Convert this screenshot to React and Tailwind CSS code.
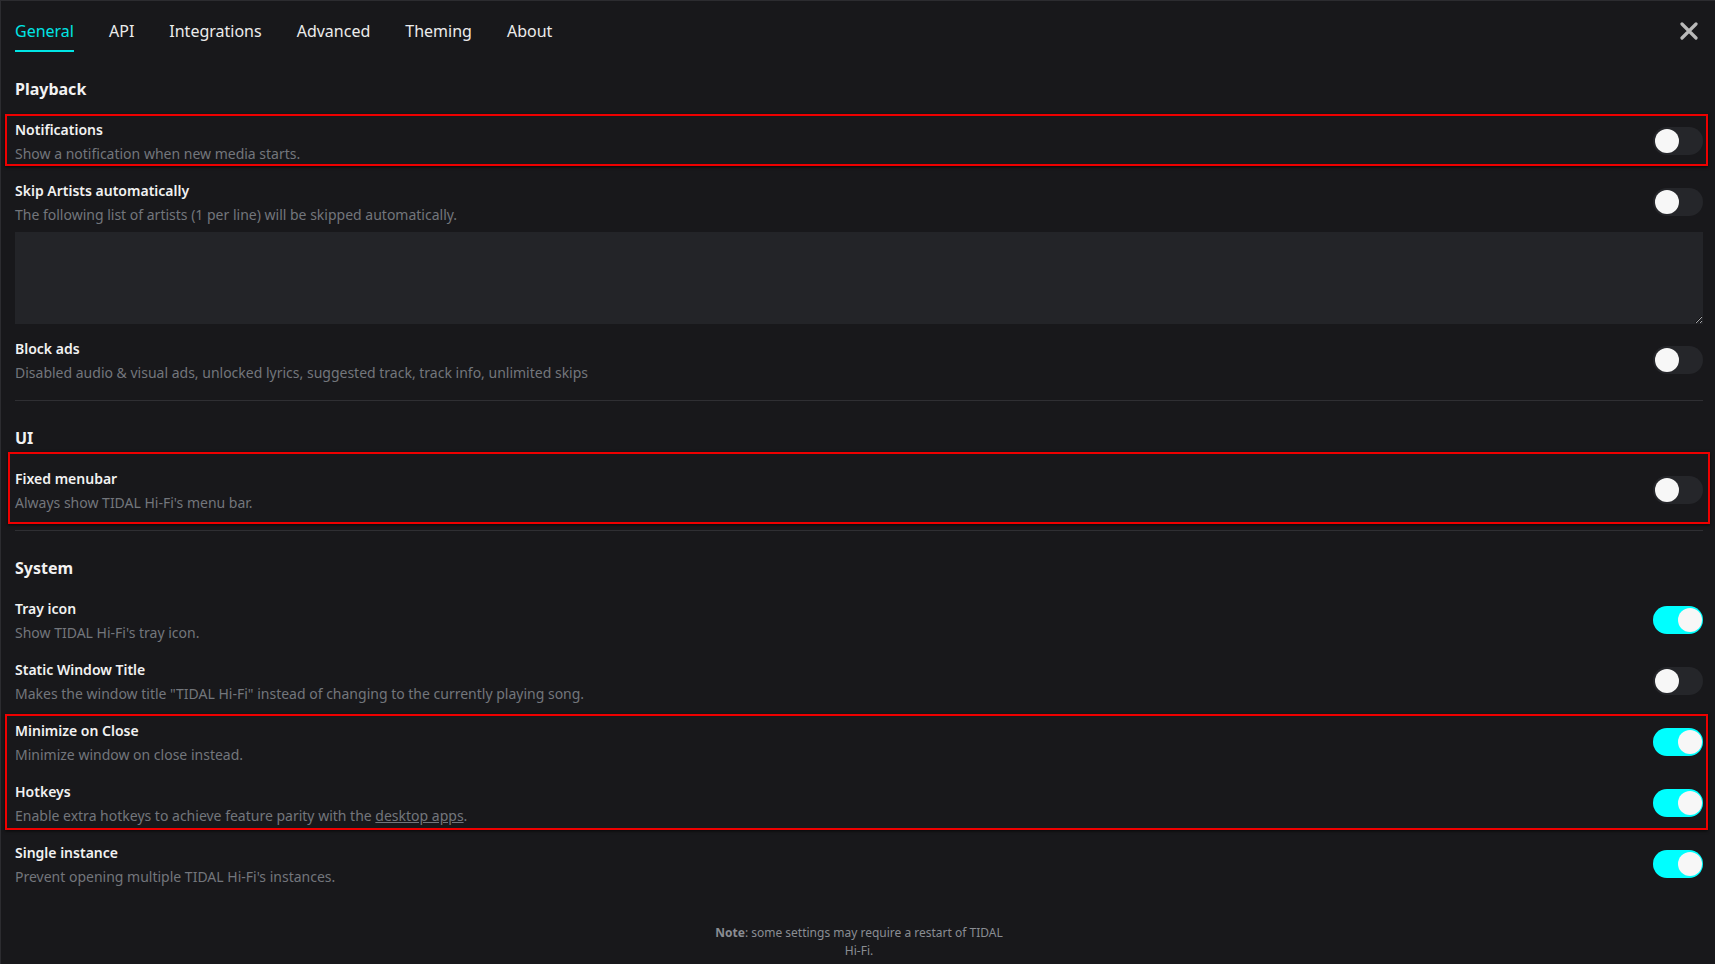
import React from "react";

const FONT = { fontFamily: '"Noto Sans", "Open Sans", sans-serif' };

function Toggle({ on }) {
  return (
    <div
      className={
        "relative mb-[2px] h-[28px] w-[50px] shrink-0 rounded-full " +
        (on ? "bg-[#00ffff]" : "bg-[#25262a]")
      }
    >
      <div
        className={
          "absolute top-[2px] h-[24px] w-[24px] rounded-full bg-[#f7f7f7] " +
          (on ? "right-[1px]" : "left-[2px]")
        }
      />
    </div>
  );
}

function Row({ title, desc, on }) {
  return (
    <div className="flex items-center justify-between">
      <div className="flex flex-col">
        <div className="text-[14px] font-semibold leading-[20px] text-[#f2f2f2]">{title}</div>
        <div className="mt-[4px] text-[14px] leading-[20px] text-[#73767c]">{desc}</div>
      </div>
      <Toggle on={on} />
    </div>
  );
}

function Heading({ children }) {
  return (
    <div className="mb-[19px] text-[16px] font-bold leading-[24px] text-[#f2f2f2]">{children}</div>
  );
}

function RedBox({ className }) {
  return (
    <div
      className={
        "pointer-events-none absolute border-2 border-[#ee0000] shadow-[0_1px_3px_rgba(0,0,0,0.7)] " +
        className
      }
    />
  );
}

export default function App() {
  const tabs = ["General", "API", "Integrations", "Advanced", "Theming", "About"];
  return (
    <div
      style={FONT}
      className="relative h-[964px] w-[1715px] overflow-hidden border-l border-t border-[#2c2c30] bg-[#18181b] pl-[14px] pr-[12px]"
    >
      {/* Tabs */}
      <div className="flex items-start justify-between pt-[18px]">
        <div className="flex gap-[35px]">
          {tabs.map((t, i) => (
            <div
              key={t}
              className={
                "border-b-2 pb-[7px] text-[16px] leading-[24px] " +
                (i === 0
                  ? "border-[#00e5e5] text-[#00e5e5]"
                  : "border-transparent text-[#ececec]")
              }
            >
              {t}
            </div>
          ))}
        </div>
        <div className="mr-[5px] mt-[3px]">
          <svg width="18" height="18" viewBox="0 0 18 18">
            <path
              d="M2 2 L16 16 M16 2 L2 16"
              stroke="#b9b9b9"
              strokeWidth="3.2"
              strokeLinecap="round"
            />
          </svg>
        </div>
      </div>

      {/* Playback */}
      <div className="mt-[25px]">
        <Heading>Playback</Heading>
        <div className="flex flex-col gap-[17px]">
          <Row title="Notifications" desc="Show a notification when new media starts." on={false} />
          <div>
            <Row
              title="Skip Artists automatically"
              desc="The following list of artists (1 per line) will be skipped automatically."
              on={false}
            />
            <textarea
              className="mt-[7px] block h-[92px] w-full resize-y border-0 bg-[#232428] p-2 text-[14px] text-[#f2f2f2] outline-none [color-scheme:dark]"
              defaultValue=""
            />
          </div>
          <div className="mt-[-2px]">
            <Row
              title="Block ads"
              desc="Disabled audio & visual ads, unlocked lyrics, suggested track, track info, unlimited skips"
              on={false}
            />
          </div>
        </div>
      </div>

      <div className="mb-[25px] mt-[17px] border-t border-[#2f2f33]" />

      {/* UI */}
      <div>
        <Heading>UI</Heading>
        <Row title="Fixed menubar" desc="Always show TIDAL Hi-Fi's menu bar." on={false} />
      </div>

      <div className="mb-[25px] mt-[17px] border-t border-[#2f2f33]" />

      {/* System */}
      <div>
        <Heading>System</Heading>
        <div className="flex flex-col gap-[17px]">
          <Row title="Tray icon" desc="Show TIDAL Hi-Fi's tray icon." on={true} />
          <Row
            title="Static Window Title"
            desc={'Makes the window title "TIDAL Hi-Fi" instead of changing to the currently playing song.'}
            on={false}
          />
          <Row title="Minimize on Close" desc="Minimize window on close instead." on={true} />
          <Row
            title="Hotkeys"
            desc={
              <span>
                Enable extra hotkeys to achieve feature parity with the{" "}
                <span className="underline">desktop apps</span>.
              </span>
            }
            on={true}
          />
          <Row
            title="Single instance"
            desc="Prevent opening multiple TIDAL Hi-Fi's instances."
            on={true}
          />
        </div>
      </div>

      <div className="mt-[37px] flex justify-center">
        <div className="w-[300px] text-center text-[12px] leading-[18px] text-[#8a8d93]">
          <span className="font-bold">Note</span>: some settings may require a restart of TIDAL Hi-Fi.
        </div>
      </div>

      {/* Annotation boxes */}
      <RedBox className="left-[4px] top-[113px] h-[52px] w-[1703px]" />
      <RedBox className="left-[7px] top-[451px] h-[72px] w-[1702px]" />
      <RedBox className="left-[4px] top-[713px] h-[116px] w-[1703px]" />
    </div>
  );
}
